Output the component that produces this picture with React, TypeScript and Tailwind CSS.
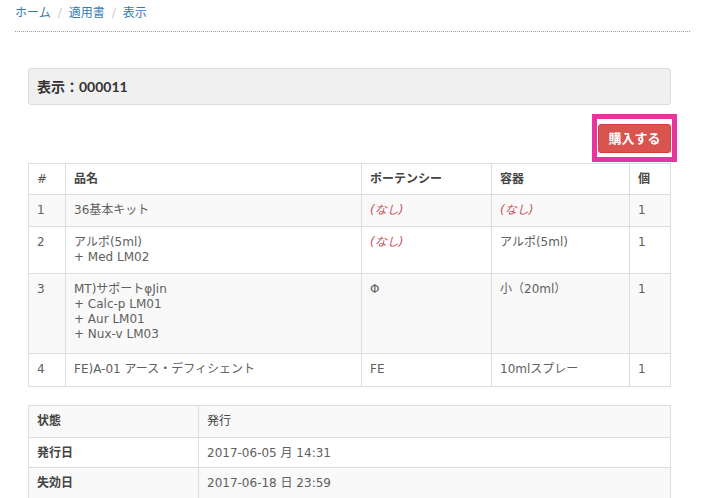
import React from "react";

const font = { fontFamily: '"DejaVu Sans", "Noto Sans CJK JP", sans-serif' };

const Nashi = () => <span className="italic text-[#c9545a]">(なし)</span>;

export default function App() {
  const rows: { n: string; name: React.ReactNode; pot: React.ReactNode; cont: React.ReactNode; q: string; h: string; striped: boolean }[] = [
    { n: "1", name: "36基本キット", pot: <Nashi />, cont: <Nashi />, q: "1", h: "h-[32px]", striped: true },
    {
      n: "2",
      name: (
        <>
          アルポ(5ml)
          <br />+ Med LM02
        </>
      ),
      pot: <Nashi />,
      cont: "アルポ(5ml)",
      q: "1",
      h: "h-[47px]",
      striped: false,
    },
    {
      n: "3",
      name: (
        <>
          MT)サポートφJin
          <br />+ Calc-p LM01
          <br />+ Aur LM01
          <br />+ Nux-v LM03
        </>
      ),
      pot: "Φ",
      cont: "小（20ml）",
      q: "1",
      h: "h-[80px]",
      striped: true,
    },
    { n: "4", name: "FE)A-01 アース・デフィシェント", pot: "FE", cont: "10mlスプレー", q: "1", h: "h-[33px]", striped: false },
  ];

  const td = "border border-[#dddddd] px-[8px] pt-[8px] align-top leading-[15px]";

  return (
    <div className="min-h-[498px] bg-white text-[12px] text-[#606060]" style={font}>
      <div className="pl-[15px] pr-[17px]">
        <div className="h-[32px] border-b border-dotted border-[#9a9a9a] pt-[5px] leading-[17px]">
          <span className="text-[#337ab7]">ホーム</span>
          <span className="px-[7px] text-[#cccccc]">/</span>
          <span className="text-[#337ab7]">適用書</span>
          <span className="px-[7px] text-[#cccccc]">/</span>
          <span className="text-[#337ab7]">表示</span>
        </div>
      </div>

      <div className="pl-[28px] pr-[36px]">
        <div className="mt-[36px] flex h-[37px] items-center rounded-[3px] border border-[#dddddd] bg-[#f0f0f0] px-[8px]">
          <span
            className="text-[14px] font-bold text-[#333333]"
            style={{ fontFamily: 'Lato, "Noto Sans CJK JP", sans-serif' }}
          >
            表示：000011
          </span>
        </div>

        <div className="mt-[19px] flex justify-end">
          <div className="relative">
            <button className="flex h-[29px] w-[73px] items-center justify-center rounded-[3px] border border-[#d43f3a] bg-[#d9534f] text-[13px] font-bold text-white">
              購入する
            </button>
            <span className="pointer-events-none absolute -left-[6px] -right-[6px] -top-[10px] -bottom-[9px] border-[5px] border-[#e4369d]" />
          </div>
        </div>

        <table className="mt-[10px] w-full border-collapse">
          <thead>
            <tr className="h-[31px]">
              <th className={`${td} w-[37px] text-left font-normal text-[#555555]`}>#</th>
              <th className={`${td} w-[296px] text-left font-bold text-[#444444]`}>品名</th>
              <th className={`${td} w-[130px] text-left font-bold text-[#444444]`}>ポーテンシー</th>
              <th className={`${td} w-[138px] text-left font-bold text-[#444444]`}>容器</th>
              <th className={`${td} text-left font-bold text-[#444444]`}>個</th>
            </tr>
          </thead>
          <tbody>
            {rows.map((r) => (
              <tr key={r.n} className={`${r.h} ${r.striped ? "bg-[#f9f9f9]" : "bg-white"}`}>
                <td className={td}>{r.n}</td>
                <td className={td}>{r.name}</td>
                <td className={td}>{r.pot}</td>
                <td className={td}>{r.cont}</td>
                <td className={td}>{r.q}</td>
              </tr>
            ))}
          </tbody>
        </table>

        <table className="mt-[18px] w-full border-collapse">
          <tbody>
            <tr className="h-[32px] bg-[#f9f9f9]">
              <th className={`${td} w-[170px] text-left font-bold text-[#444444]`}>状態</th>
              <td className={`${td} text-[#444444]`}>発行</td>
            </tr>
            <tr className="h-[30px] bg-white">
              <th className={`${td} text-left font-bold text-[#444444]`}>発行日</th>
              <td className={td}>2017-06-05 月 14:31</td>
            </tr>
            <tr className="h-[31px] bg-[#f9f9f9]">
              <th className={`${td} text-left font-bold text-[#444444]`}>失効日</th>
              <td className={td}>2017-06-18 日 23:59</td>
            </tr>
          </tbody>
        </table>
      </div>
    </div>
  );
}
